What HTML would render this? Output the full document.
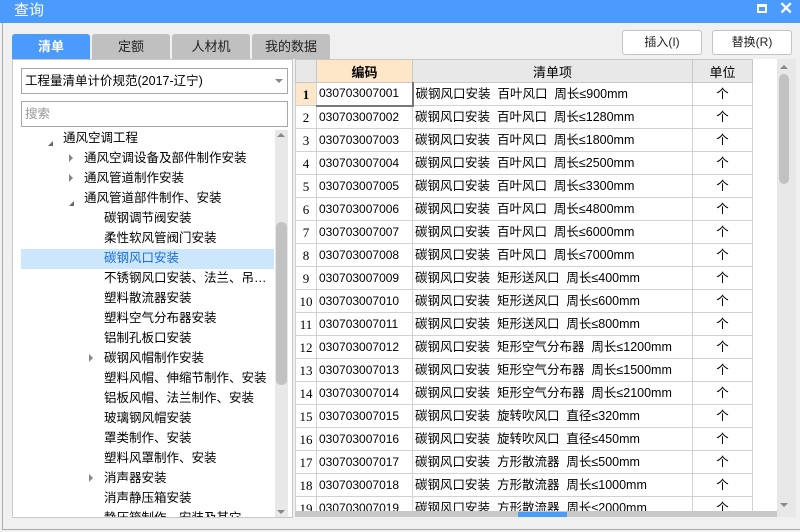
<!DOCTYPE html>
<html><head><meta charset="utf-8"><style>
*{margin:0;padding:0;box-sizing:border-box}
body{width:800px;height:532px;overflow:hidden;background:#f0f0f0;font-family:"Liberation Sans","Noto Sans CJK SC",sans-serif;font-size:12px;color:#000;position:relative}
.abs{position:absolute}
#title{left:0;top:0;width:800px;height:23px;background:#4a9bfb;color:#fff;font-size:15px;padding:1px 0 0 14px;line-height:20px}
.tab{position:absolute;top:34px;height:25px;width:78px;background:#c0c0c0;border-radius:3px 3px 0 0;text-align:center;line-height:25px;font-size:13px;color:#222}
.btn{position:absolute;top:30px;height:25px;width:80px;background:#fff;border:1px solid #c4c4c4;border-radius:3px;text-align:center;line-height:23px;font-size:12px;color:#222}
#left{left:12px;top:59px;width:281px;height:459px;background:#fff;border:1px solid #c8c8c8}
.tr{position:absolute;height:20px;line-height:20px;font-size:12.5px;white-space:nowrap}
.arr{position:absolute;width:0;height:0}
table{border-collapse:collapse;position:absolute;left:296px;top:60px;table-layout:fixed}
td{border:1px solid #d2d2d2;height:23px;padding:0 2px;white-space:pre;overflow:hidden;font-size:12.5px;background:#fff;vertical-align:middle;line-height:21px}
td.n{text-align:center;font-family:"Liberation Serif","Noto Sans CJK SC",serif;font-size:13px;padding:0}
td.c{font-family:"Liberation Sans",sans-serif;font-size:12px;line-height:21px}
td.u{text-align:center}
th{border:1px solid #c8c8c8;height:23px;background:#e8e8e8;font-weight:normal;font-size:13px}
</style></head><body>
<div id="title" class="abs">查询</div>
<div class="abs" style="left:757px;top:4px;width:10px;height:9px;border:2px solid #fff;border-top-width:3px"></div>
<div class="abs" style="left:779px;top:-1px;color:#fff;font-size:17px;font-weight:bold">✕</div>
<div class="abs" style="left:2px;top:23px;width:1px;height:507px;background:#aaa"></div>
<div class="abs" style="left:2px;top:529px;width:798px;height:1px;background:#aaa"></div>

<div class="tab" style="left:12px;background:#4a9bfb;color:#fff;font-weight:bold">清单</div>
<div class="tab" style="left:92px">定额</div>
<div class="tab" style="left:172px">人材机</div>
<div class="tab" style="left:252px">我的数据</div>
<div class="btn" style="left:622px">插入(I)</div>
<div class="btn" style="left:712px">替换(R)</div>

<div id="left" class="abs"></div>
<div class="abs" style="left:21px;top:68px;width:267px;height:26px;border:1px solid #a8a8a8;background:#fff;line-height:24px;padding-left:3px;font-size:12.5px">工程量清单计价规范(2017-辽宁)</div>
<div class="arr" style="left:275px;top:79px;border-left:4px solid transparent;border-right:4px solid transparent;border-top:4px solid #888"></div>
<div class="abs" style="left:21px;top:101px;width:267px;height:26px;border:1px solid #a8a8a8;background:#fff;line-height:24px;padding-left:3px;color:#999;font-size:12.5px">搜索</div>

<div class="abs" style="left:275px;top:130px;width:13px;height:387px;background:#e8e8e8"></div>
<div class="abs" style="left:276px;top:222px;width:11px;height:163px;background:#c2c2c2;border-radius:5px"></div>
<div class="arr" style="left:277px;top:133px;border-left:4px solid transparent;border-right:4px solid transparent;border-bottom:4px solid #888"></div>
<div class="arr" style="left:277px;top:510px;border-left:4px solid transparent;border-right:4px solid transparent;border-top:4px solid #888"></div>
<div class="abs" style="left:21px;top:249px;width:253px;height:20px;background:#cce6fb"></div>

<div class="tr" style="left:63px;top:128px">通风空调工程</div>
<div class="arr" style="left:48px;top:141px;border-left:5px solid transparent;border-bottom:5px solid #666"></div>
<div class="tr" style="left:84px;top:148px">通风空调设备及部件制作安装</div>
<div class="arr" style="left:69px;top:154px;border-top:4px solid transparent;border-bottom:4px solid transparent;border-left:4px solid #888"></div>
<div class="tr" style="left:84px;top:168px">通风管道制作安装</div>
<div class="arr" style="left:69px;top:174px;border-top:4px solid transparent;border-bottom:4px solid transparent;border-left:4px solid #888"></div>
<div class="tr" style="left:84px;top:188px">通风管道部件制作、安装</div>
<div class="arr" style="left:69px;top:201px;border-left:5px solid transparent;border-bottom:5px solid #666"></div>
<div class="tr" style="left:104px;top:208px">碳钢调节阀安装</div>
<div class="tr" style="left:104px;top:228px">柔性软风管阀门安装</div>
<div class="tr" style="left:104px;top:248px;color:#1a6fd8">碳钢风口安装</div>
<div class="tr" style="left:104px;top:268px">不锈钢风口安装、法兰、吊…</div>
<div class="tr" style="left:104px;top:288px">塑料散流器安装</div>
<div class="tr" style="left:104px;top:308px">塑料空气分布器安装</div>
<div class="tr" style="left:104px;top:328px">铝制孔板口安装</div>
<div class="tr" style="left:104px;top:348px">碳钢风帽制作安装</div>
<div class="arr" style="left:89px;top:354px;border-top:4px solid transparent;border-bottom:4px solid transparent;border-left:4px solid #888"></div>
<div class="tr" style="left:104px;top:368px">塑料风帽、伸缩节制作、安装</div>
<div class="tr" style="left:104px;top:388px">铝板风帽、法兰制作、安装</div>
<div class="tr" style="left:104px;top:408px">玻璃钢风帽安装</div>
<div class="tr" style="left:104px;top:428px">罩类制作、安装</div>
<div class="tr" style="left:104px;top:448px">塑料风罩制作、安装</div>
<div class="tr" style="left:104px;top:468px">消声器安装</div>
<div class="arr" style="left:89px;top:474px;border-top:4px solid transparent;border-bottom:4px solid transparent;border-left:4px solid #888"></div>
<div class="tr" style="left:104px;top:488px">消声静压箱安装</div>
<div class="abs" style="left:13px;top:508px;width:262px;height:9px;overflow:hidden"><div class="tr" style="left:91px;top:0">静压箱制作、安装及其它</div></div>

<div class="abs" style="left:295px;top:59px;width:484px;height:452px;background:#fff;overflow:hidden">
<table style="left:0;top:0;width:457px">
<colgroup><col style="width:21px"><col style="width:96px"><col style="width:280px"><col style="width:60px"></colgroup>
<tr><th style="background:#e8e8e8"></th><th style="background:#fde7c8;font-weight:bold">编码</th><th>清单项</th><th>单位</th></tr>
<tr><td class="n" style="background:#fde7c8;font-weight:bold">1</td><td class="c" style="border:1px solid #4a9bfb;border-right:2px solid #777;border-bottom:2px solid #777">030703007001</td><td>碳钢风口安装  百叶风口  周长≤900mm</td><td class="u">个</td></tr>
<tr><td class="n">2</td><td class="c">030703007002</td><td>碳钢风口安装  百叶风口  周长≤1280mm</td><td class="u">个</td></tr>
<tr><td class="n">3</td><td class="c">030703007003</td><td>碳钢风口安装  百叶风口  周长≤1800mm</td><td class="u">个</td></tr>
<tr><td class="n">4</td><td class="c">030703007004</td><td>碳钢风口安装  百叶风口  周长≤2500mm</td><td class="u">个</td></tr>
<tr><td class="n">5</td><td class="c">030703007005</td><td>碳钢风口安装  百叶风口  周长≤3300mm</td><td class="u">个</td></tr>
<tr><td class="n">6</td><td class="c">030703007006</td><td>碳钢风口安装  百叶风口  周长≤4800mm</td><td class="u">个</td></tr>
<tr><td class="n">7</td><td class="c">030703007007</td><td>碳钢风口安装  百叶风口  周长≤6000mm</td><td class="u">个</td></tr>
<tr><td class="n">8</td><td class="c">030703007008</td><td>碳钢风口安装  百叶风口  周长≤7000mm</td><td class="u">个</td></tr>
<tr><td class="n">9</td><td class="c">030703007009</td><td>碳钢风口安装  矩形送风口  周长≤400mm</td><td class="u">个</td></tr>
<tr><td class="n">10</td><td class="c">030703007010</td><td>碳钢风口安装  矩形送风口  周长≤600mm</td><td class="u">个</td></tr>
<tr><td class="n">11</td><td class="c">030703007011</td><td>碳钢风口安装  矩形送风口  周长≤800mm</td><td class="u">个</td></tr>
<tr><td class="n">12</td><td class="c">030703007012</td><td>碳钢风口安装  矩形空气分布器  周长≤1200mm</td><td class="u">个</td></tr>
<tr><td class="n">13</td><td class="c">030703007013</td><td>碳钢风口安装  矩形空气分布器  周长≤1500mm</td><td class="u">个</td></tr>
<tr><td class="n">14</td><td class="c">030703007014</td><td>碳钢风口安装  矩形空气分布器  周长≤2100mm</td><td class="u">个</td></tr>
<tr><td class="n">15</td><td class="c">030703007015</td><td>碳钢风口安装  旋转吹风口  直径≤320mm</td><td class="u">个</td></tr>
<tr><td class="n">16</td><td class="c">030703007016</td><td>碳钢风口安装  旋转吹风口  直径≤450mm</td><td class="u">个</td></tr>
<tr><td class="n">17</td><td class="c">030703007017</td><td>碳钢风口安装  方形散流器  周长≤500mm</td><td class="u">个</td></tr>
<tr><td class="n">18</td><td class="c">030703007018</td><td>碳钢风口安装  方形散流器  周长≤1000mm</td><td class="u">个</td></tr>
<tr><td class="n">19</td><td class="c">030703007019</td><td>碳钢风口安装  方形散流器  周长≤2000mm</td><td class="u">个</td></tr>
</table>
</div>
<div class="abs" style="left:295px;top:511px;width:482px;height:6px;background:#c8c8c8"></div>
<div class="abs" style="left:518px;top:512px;width:49px;height:5px;background:#4a9bfb"></div>
<div class="abs" style="left:777px;top:59px;width:19px;height:458px;background:#e8e8e8"></div>
<div class="abs" style="left:779px;top:74px;width:10px;height:110px;background:#c2c2c2;border-radius:5px"></div>
<div class="arr" style="left:780px;top:65px;border-left:4px solid transparent;border-right:4px solid transparent;border-bottom:4px solid #888"></div>
<div class="arr" style="left:780px;top:503px;border-left:4px solid transparent;border-right:4px solid transparent;border-top:4px solid #888"></div>
</body></html>
